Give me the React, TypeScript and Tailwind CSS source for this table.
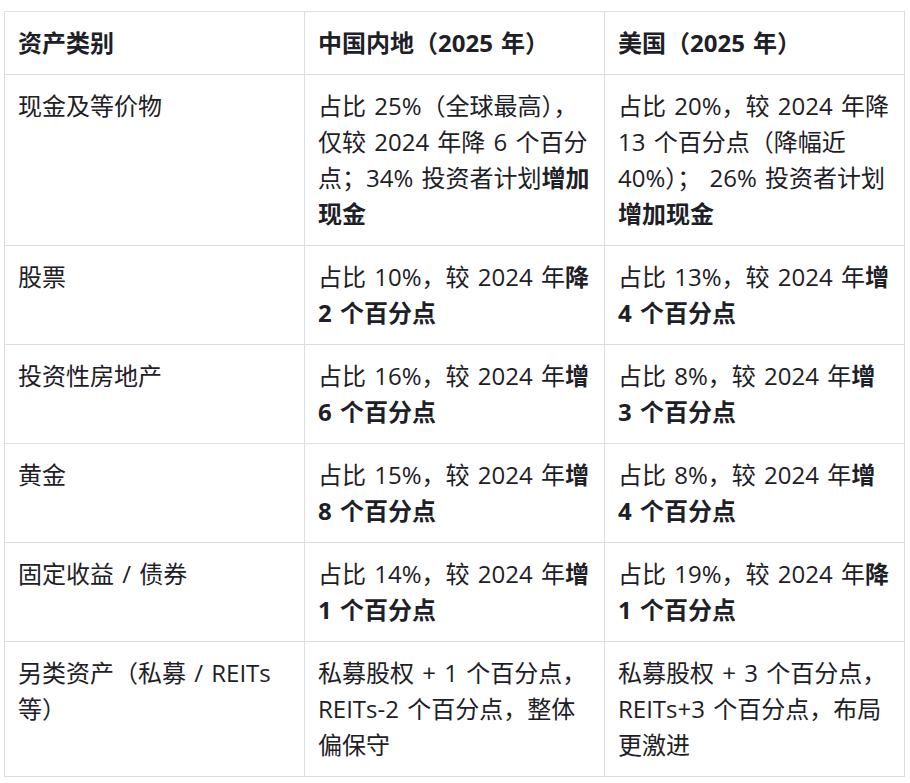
const rows: { name: React.ReactNode; cn: React.ReactNode; us: React.ReactNode }[] = [
  {
    name: '现金及等价物',
    cn: (
      <>
        占比 25%（全球最高），仅较 2024 年降 6 个百分点；34% 投资者计划<b>增加现金</b>
      </>
    ),
    us: (
      <>
        占比 20%，较 2024 年降 13 个百分点（降幅近 40%）； 26% 投资者计划<b>增加现金</b>
      </>
    ),
  },
  {
    name: '股票',
    cn: (
      <>
        占比 10%，较 2024 年<b>降 2 个百分点</b>
      </>
    ),
    us: (
      <>
        占比 13%，较 2024 年<b>增 4 个百分点</b>
      </>
    ),
  },
  {
    name: '投资性房地产',
    cn: (
      <>
        占比 16%，较 2024 年<b>增 6 个百分点</b>
      </>
    ),
    us: (
      <>
        占比 8%，较 2024 年<b>增 3 个百分点</b>
      </>
    ),
  },
  {
    name: '黄金',
    cn: (
      <>
        占比 15%，较 2024 年<b>增 8 个百分点</b>
      </>
    ),
    us: (
      <>
        占比 8%，较 2024 年<b>增 4 个百分点</b>
      </>
    ),
  },
  {
    name: '固定收益 / 债券',
    cn: (
      <>
        占比 14%，较 2024 年<b>增 1 个百分点</b>
      </>
    ),
    us: (
      <>
        占比 19%，较 2024 年<b>降 1 个百分点</b>
      </>
    ),
  },
  {
    name: '另类资产（私募 / REITs 等）',
    cn: '私募股权 + 1 个百分点，REITs-2 个百分点，整体偏保守',
    us: '私募股权 + 3 个百分点，REITs+3 个百分点，布局更激进',
  },
]

const cell = 'border border-[#dcdde1] px-[13px] py-[13px] align-top text-left'

export default function App() {
  return (
    <div className="min-h-screen bg-white pt-[11px] pl-[4px] text-[24px] leading-[36px] text-[#1d2026] [word-spacing:2px] [font-family:'Open_Sans','Noto_Sans_CJK_SC',sans-serif]">
      <table className="w-[900px] table-fixed border-collapse">
        <colgroup>
          <col className="w-[300px]" />
          <col className="w-[300px]" />
          <col className="w-[300px]" />
        </colgroup>
        <thead>
          <tr>
            <th className={`${cell} font-bold`}>资产类别</th>
            <th className={`${cell} font-bold`}>中国内地（2025 年）</th>
            <th className={`${cell} font-bold`}>美国（2025 年）</th>
          </tr>
        </thead>
        <tbody>
          {rows.map((r, i) => (
            <tr key={i}>
              <td className={cell}>{r.name}</td>
              <td className={cell}>{r.cn}</td>
              <td className={cell}>{r.us}</td>
            </tr>
          ))}
        </tbody>
      </table>
    </div>
  )
}
